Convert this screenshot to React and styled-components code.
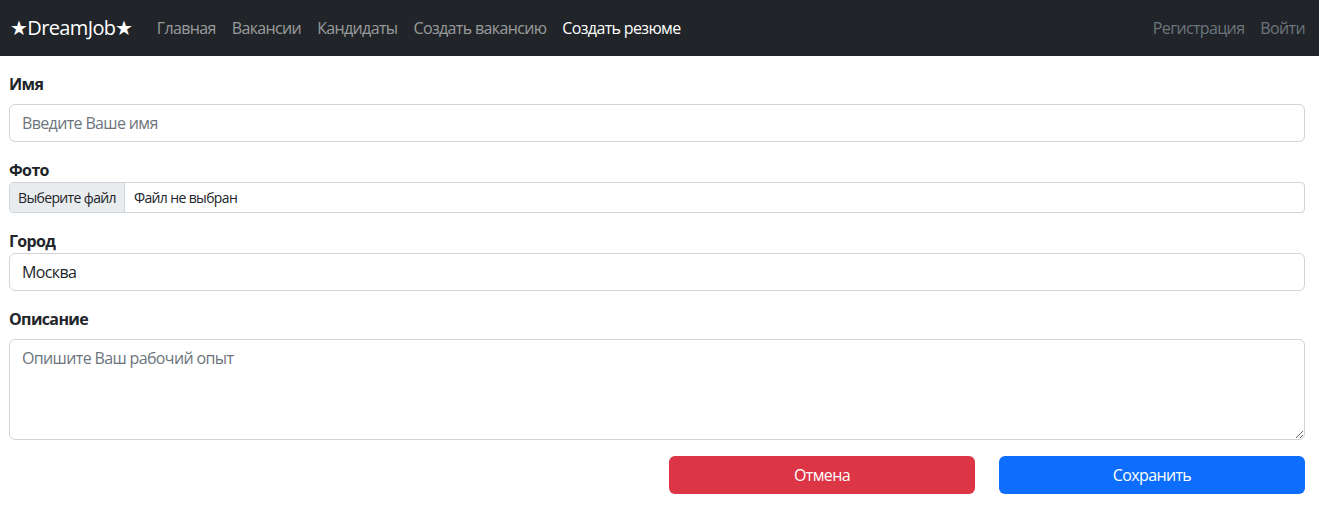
import React from "react";
import styled, { createGlobalStyle } from "styled-components";

const Global = createGlobalStyle`
  * { box-sizing: border-box; }
  body {
    margin: 0;
    font-family: "Open Sans", "Noto Sans", sans-serif;
    font-size: 16px;
    line-height: 1.5;
    letter-spacing: -0.04em;
    color: #212529;
    background: #fff;
  }
  input, textarea, button { letter-spacing: inherit; }
`;

const Nav = styled.nav`
  height: 56px;
  background: #212529;
  display: flex;
  align-items: center;
  padding: 0 14px 0 10px;
`;

const Brand = styled.a`
  font-size: 20px;
  color: #fff;
  text-decoration: none;
  margin-right: 16px;
  line-height: 30px;
`;

const NavList = styled.div`
  display: flex;
  align-items: center;
  flex: 1;
`;

const NavRight = styled.div`
  display: flex;
  align-items: center;
`;

const NavLink = styled.a`
  color: ${(p) =>
    p.$active ? "#fff" : p.$muted ? "#6c757d" : "rgba(255,255,255,0.55)"};
  text-decoration: none;
  padding: 8px;
  font-size: 16px;
  &:last-child { padding-right: 0; }
`;

const Main = styled.main`
  padding: 16px 14px 0 9px;
`;

const Field = styled.div`
  margin-bottom: 16px;
`;

const Label = styled.label`
  display: block;
  font-weight: 700;
  margin-bottom: ${(p) => (p.$tight ? "0" : "8px")};
`;

const Input = styled.input`
  display: block;
  width: 100%;
  height: 38px;
  padding: 6px 12px;
  font: inherit;
  color: #212529;
  border: 1px solid #ced4da;
  border-radius: 6px;
  background: #fff;
  &::placeholder { color: #6c757d; }
`;

const FileBox = styled.div`
  display: flex;
  height: 31px;
  border: 1px solid #ced4da;
  border-radius: 4px;
  overflow: hidden;
  font-size: 14px;
`;

const FileButton = styled.span`
  background: #e9ecef;
  padding: 0 8px;
  display: flex;
  align-items: center;
  border-right: 1px solid #ced4da;
`;

const FileName = styled.span`
  padding: 0 9px;
  display: flex;
  align-items: center;
`;

const TextArea = styled.textarea`
  display: block;
  width: 100%;
  height: 101px;
  padding: 6px 12px;
  font: inherit;
  color: #212529;
  border: 1px solid #ced4da;
  border-radius: 6px;
  resize: vertical;
  &::placeholder { color: #6c757d; }
`;

const Buttons = styled.div`
  display: grid;
  grid-template-columns: repeat(4, 1fr);
  column-gap: 24px;
`;

const Button = styled.button`
  grid-column: ${(p) => p.$col};
  height: 38px;
  border: none;
  border-radius: 6px;
  color: #fff;
  font: inherit;
  background: ${(p) => p.$bg};
`;

export default function App() {
  return (
    <>
      <Global />
      <Nav>
        <Brand href="#">★DreamJob★</Brand>
        <NavList>
          <NavLink href="#">Главная</NavLink>
          <NavLink href="#">Вакансии</NavLink>
          <NavLink href="#">Кандидаты</NavLink>
          <NavLink href="#">Создать вакансию</NavLink>
          <NavLink href="#" $active>Создать резюме</NavLink>
        </NavList>
        <NavRight>
          <NavLink href="#" $muted>Регистрация</NavLink>
          <NavLink href="#" $muted>Войти</NavLink>
        </NavRight>
      </Nav>
      <Main>
        <Field>
          <Label>Имя</Label>
          <Input placeholder="Введите Ваше имя" />
        </Field>
        <Field>
          <Label $tight>Фото</Label>
          <FileBox>
            <FileButton>Выберите файл</FileButton>
            <FileName>Файл не выбран</FileName>
          </FileBox>
        </Field>
        <Field>
          <Label $tight>Город</Label>
          <Input defaultValue="Москва" />
        </Field>
        <Field>
          <Label>Описание</Label>
          <TextArea placeholder="Опишите Ваш рабочий опыт" />
        </Field>
        <Buttons>
          <Button $col={3} $bg="#dc3545">Отмена</Button>
          <Button $col={4} $bg="#0d6efd">Сохранить</Button>
        </Buttons>
      </Main>
    </>
  );
}
